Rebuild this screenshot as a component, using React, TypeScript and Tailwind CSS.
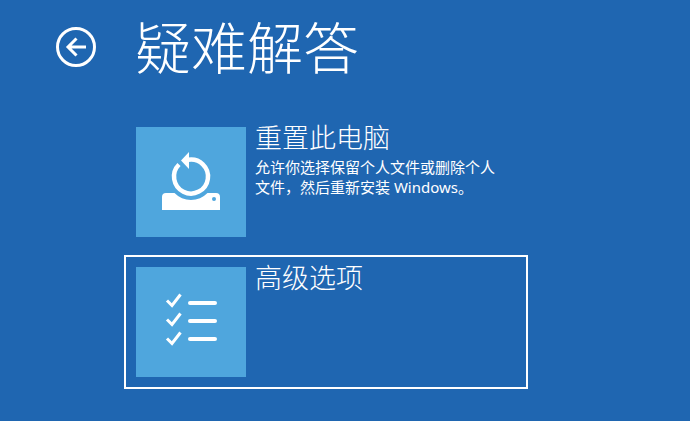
export default function App() {
  const font = "font-['Noto_Sans','Noto_Sans_CJK_SC',sans-serif]";
  return (
    <div className={`w-[690px] h-[421px] overflow-hidden bg-[#1f66b1] text-white ${font}`}>
      <header className="flex items-center h-[94px] pl-[56px]">
        <svg width="40" height="40" viewBox="0 0 40 40" fill="none" stroke="white" strokeWidth="3">
          <circle cx="20" cy="20" r="18.5" />
          <path d="M30 20H13M20.5 11.5L12 20l8.5 8.5" strokeWidth="3" />
        </svg>
        <h1 className="ml-[39px] text-[56px] leading-[64px] font-light mt-[-1px]">疑难解答</h1>
      </header>
      <div className="ml-[124px] mt-[21px] w-[404px] flex flex-col">
        <div className="flex gap-[9px] p-[10px] pb-[16px] border-2 border-transparent">
          <div className="w-[110px] h-[110px] shrink-0 bg-[#4fa6dd] flex items-center justify-center">
            <svg width="60" height="60" viewBox="0 0 60 60" fill="white">
              <path d="M1 45 Q1 41 5 41 H13.5 A23 23 0 0 0 46.5 41 H55 Q59 41 59 45 V58 H1 Z" />
              <circle cx="53" cy="47" r="2" fill="#4fa6dd" />
              <path d="M18 12.5 A17 17 0 1 0 27 7.8" fill="none" stroke="white" strokeWidth="4.5" />
              <path d="M28 0 L28 17 L20 8.5 Z" />
            </svg>
          </div>
          <div className="flex flex-col mt-[-4px]">
            <div className="text-[27px] leading-[30px] font-light">重置此电脑</div>
            <p className="w-[245px] text-[15px] leading-[20px] mt-[4px]">允许你选择保留个人文件或删除个人文件，然后重新安装 Windows。</p>
          </div>
        </div>
        <div className="flex gap-[9px] p-[10px] h-[134px] border-2 border-white">
          <div className="w-[110px] h-[110px] shrink-0 bg-[#4fa6dd] flex items-center justify-center">
            <svg width="60" height="60" viewBox="0 0 60 60" fill="none" stroke="white">
              <g strokeWidth="3">
                <path d="M6 8.5 L11 13.5 L19.5 2.5" />
                <path d="M6 27.5 L11 32.5 L19.5 21.5" />
                <path d="M6 46.5 L11 51.5 L19.5 40.5" />
              </g>
              <g strokeWidth="4" strokeLinecap="round">
                <path d="M29 11 H54" />
                <path d="M29 29 H54" />
                <path d="M29 47 H54" />
              </g>
            </svg>
          </div>
          <div className="text-[27px] leading-[30px] font-light mt-[-4px]">高级选项</div>
        </div>
      </div>
    </div>
  );
}
